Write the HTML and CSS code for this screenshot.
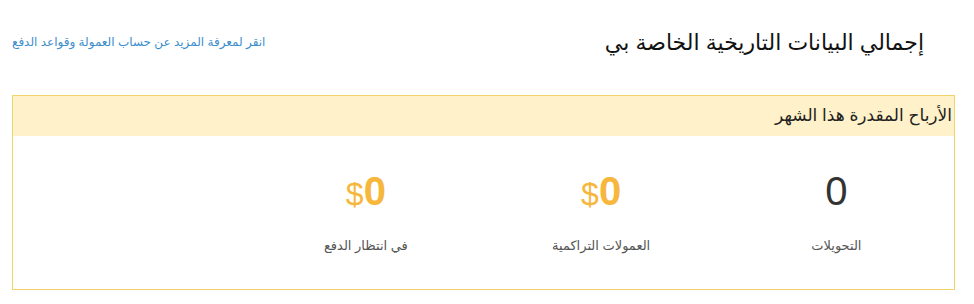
FILE: index.html
```html
<!DOCTYPE html>
<html lang="ar" dir="rtl">

<head>
    <meta charset="UTF-8">
    <title>إجمالي البيانات التاريخية</title>
    <link rel="stylesheet" href="styles.css">
</head>

<body>
    <div class="page">
        <div class="top-row">
            <h1 class="page-title">إجمالي البيانات التاريخية الخاصة بي</h1>
            <a class="help-link" href="#">انقر لمعرفة المزيد عن حساب العمولة وقواعد الدفع</a>
        </div>

        <div class="stats-box">
            <div class="stats-head">الأرباح المقدرة هذا الشهر</div>
            <div class="stats-body">
                <div class="stat">
                    <div class="stat-value plain">0</div>
                    <div class="stat-label">التحويلات</div>
                </div>
                <div class="stat">
                    <div class="stat-value money"><span class="cur">$</span>0</div>
                    <div class="stat-label">العمولات التراكمية</div>
                </div>
                <div class="stat">
                    <div class="stat-value money"><span class="cur">$</span>0</div>
                    <div class="stat-label">في انتظار الدفع</div>
                </div>
                <div class="stat"></div>
            </div>
        </div>
    </div>
</body>

</html>
```

FILE: styles.css
```css
body {
    margin: 0;
    font-family: "Liberation Sans", "DejaVu Sans", Arial, sans-serif;
    background: #ffffff;
    color: #333333;
}

.page {
    width: 943px;
    margin-right: 19px;
    padding-top: 22px;
}

.top-row {
    display: flex;
    justify-content: space-between;
    align-items: flex-start;
    height: 73px;
}

.page-title {
    margin: 8px 31px 0 0;
    font-size: 22px;
    font-weight: normal;
    color: #111111;
}

.help-link {
    font-size: 12px;
    color: #3c8dcb;
    text-decoration: none;
    margin-top: 13px;
}

.stats-box {
    border: 1px solid #f1d46a;
    height: 193px;
}

.stats-head {
    background: #fff1c9;
    height: 40px;
    line-height: 40px;
    font-size: 17px;
    color: #222222;
    padding-right: 2px;
}

.stats-body {
    display: grid;
    grid-template-columns: repeat(4, 1fr);
}

.stat {
    text-align: center;
    padding-top: 32px;
}

.stat-value {
    font-size: 40px;
    line-height: 46px;
    height: 46px;
}

.stat-value.plain {
    color: #333333;
}

.stat-value.money {
    color: #f6b73c;
    font-weight: bold;
    direction: ltr;
}

.stat-value .cur {
    font-weight: normal;
    font-size: 32px;
}

.stat-label {
    margin-top: 24px;
    font-size: 13px;
    color: #555555;
}
```
